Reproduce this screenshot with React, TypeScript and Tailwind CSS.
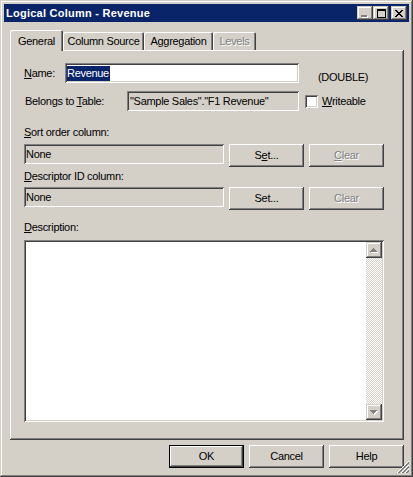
import React from "react";

const RAISED =
  "shadow-[inset_-1px_-1px_#404040,inset_1px_1px_#ffffff,inset_-2px_-2px_#808080]";
const CAPTION =
  "shadow-[inset_-1px_-1px_#404040,inset_1px_1px_#d4d0c8,inset_-2px_-2px_#808080,inset_2px_2px_#ffffff]";
const SUNKEN =
  "shadow-[inset_1px_1px_#808080,inset_-1px_-1px_#ffffff,inset_2px_2px_#404040,inset_-2px_-2px_#d4d0c8]";
const DISABLED = "text-[#808080] [text-shadow:1px_1px_0_#ffffff]";

function Pix({
  rows,
  color,
  shadow,
}: {
  rows: string[];
  color: string;
  shadow?: string;
}) {
  const w = rows[0].length + (shadow ? 1 : 0);
  const h = rows.length + (shadow ? 1 : 0);
  const cells: { x: number; y: number }[] = [];
  rows.forEach((r, y) =>
    r.split("").forEach((c, x) => {
      if (c === "x") cells.push({ x, y });
    })
  );
  return (
    <svg width={w} height={h} shapeRendering="crispEdges" className="block">
      {shadow &&
        cells.map((p) => (
          <rect key={"s" + p.x + "-" + p.y} x={p.x + 1} y={p.y + 1} width={1} height={1} fill={shadow} />
        ))}
      {cells.map((p) => (
        <rect key={"c" + p.x + "-" + p.y} x={p.x} y={p.y} width={1} height={1} fill={color} />
      ))}
    </svg>
  );
}

const CLOSE = ["xx....xx", ".xx..xx.", "..xxxx..", "...xx...", "..xxxx..", ".xx..xx.", "xx....xx"];
const MAX = [
  "xxxxxxxxx",
  "xxxxxxxxx",
  "x.......x",
  "x.......x",
  "x.......x",
  "x.......x",
  "x.......x",
  "x.......x",
  "xxxxxxxxx",
];
const MIN = ["xxxxxx", "xxxxxx"];
const UP = ["...x...", "..xxx..", ".xxxxx.", "xxxxxxx"];
const DOWN = ["xxxxxxx", ".xxxxx.", "..xxx..", "...x..."];

function Grip() {
  const px: { x: number; y: number; c: string }[] = [];
  for (let y = 0; y < 12; y++) {
    for (let x = 0; x < 12; x++) {
      const t = x + y - 11;
      if (t < 0) continue;
      const m = t % 4;
      if (m === 0) px.push({ x, y, c: "#ffffff" });
      else if (m === 1 || m === 2) px.push({ x, y, c: "#808080" });
    }
  }
  return (
    <svg width={12} height={12} shapeRendering="crispEdges" className="block">
      {px.map((p) => (
        <rect key={p.x + "-" + p.y} x={p.x} y={p.y} width={1} height={1} fill={p.c} />
      ))}
    </svg>
  );
}

function Button({
  children,
  disabled,
  isDefault,
}: {
  children: React.ReactNode;
  disabled?: boolean;
  isDefault?: boolean;
}) {
  if (isDefault) {
    return (
      <div className="w-[75px] h-[23px] border border-black bg-[#d4d0c8]">
        <div className={"w-full h-full flex items-center justify-center " + RAISED}>{children}</div>
      </div>
    );
  }
  return (
    <div
      className={
        "w-[75px] h-[23px] bg-[#d4d0c8] flex items-center justify-center " +
        RAISED +
        (disabled ? " " + DISABLED : "")
      }
    >
      {children}
    </div>
  );
}

export default function App() {
  return (
    <div className="w-[413px] h-[477px] bg-[#d4d0c8] p-[4px] flex flex-col relative font-['Liberation_Sans',Arial,sans-serif] text-[11px] tracking-[-0.3px] text-black shadow-[inset_-1px_-1px_#404040,inset_1px_1px_#d4d0c8,inset_-2px_-2px_#808080,inset_2px_2px_#ffffff]">
      {/* Title bar */}
      <div className="h-[18px] bg-[#0a246a] flex items-center justify-between pl-[2px] pr-[2px]">
        <span className="text-white font-bold text-[11px] tracking-[0.25px] leading-[18px]">
          Logical Column - Revenue
        </span>
        <div className="flex items-center">
          <div className={"w-[16px] h-[14px] bg-[#d4d0c8] flex items-end pl-[4px] pb-[2px] " + CAPTION}>
            <Pix rows={MIN} color="#808080" shadow="#ffffff" />
          </div>
          <div className={"w-[16px] h-[14px] bg-[#d4d0c8] flex items-center justify-center " + CAPTION}>
            <Pix rows={MAX} color="#000000" />
          </div>
          <div className={"ml-[2px] w-[16px] h-[14px] bg-[#d4d0c8] flex items-center justify-center " + CAPTION}>
            <Pix rows={CLOSE} color="#000000" />
          </div>
        </div>
      </div>

      <div className="flex flex-col pl-[6px] pr-[5px] pt-[8px]">
        {/* Tabs */}
        <div className="flex items-end h-[20px]">
          <div className="relative z-10 -mb-px h-[21px] w-[53px] bg-[#d4d0c8] rounded-t-[2px] flex items-center justify-center pt-[1px] shadow-[inset_1px_1px_#ffffff,inset_-1px_0_#404040,inset_-2px_0_#808080]">
            General
          </div>
          <div className="h-[18px] w-[81px] bg-[#d4d0c8] rounded-t-[2px] flex items-center justify-center shadow-[inset_1px_1px_#ffffff,inset_-1px_0_#404040,inset_-2px_0_#808080]">
            Column Source
          </div>
          <div className="h-[18px] w-[69px] bg-[#d4d0c8] rounded-t-[2px] flex items-center justify-center shadow-[inset_1px_1px_#ffffff,inset_-1px_0_#404040,inset_-2px_0_#808080]">
            Aggregation
          </div>
          <div
            className={
              "h-[18px] w-[43px] bg-[#d4d0c8] rounded-t-[2px] flex items-center justify-center shadow-[inset_1px_1px_#ffffff,inset_-1px_0_#404040,inset_-2px_0_#808080] " +
              DISABLED
            }
          >
            Levels
          </div>
        </div>

        {/* Panel */}
        <div className={"h-[390px] bg-[#d4d0c8] pl-[14px] pt-[13px] flex flex-col " + RAISED}>
          {/* Name row */}
          <div className="flex items-start h-[20px]">
            <div className="w-[41px] leading-[20px]">
              <u>N</u>ame:
            </div>
            <div className={"w-[234px] h-[20px] bg-white pl-[2px] pt-[2px] " + SUNKEN}>
              <span className="inline-block h-[15px] leading-[15px] bg-[#0a246a] text-white pr-px">Revenue</span>
            </div>
            <div className="ml-[19px] mt-[8px] leading-[13px]">(DOUBLE)</div>
          </div>

          {/* Belongs row */}
          <div className="flex items-center h-[20px] mt-[8px]">
            <div className="w-[103px] pl-px leading-[20px]">
              Belongs to <u>T</u>able:
            </div>
            <div className={"w-[172px] h-[20px] bg-[#d4d0c8] pl-[3px] leading-[20px] " + SUNKEN}>
              "Sample Sales"."F1 Revenue"
            </div>
            <div className={"ml-[6px] w-[13px] h-[13px] bg-white " + SUNKEN} />
            <div className="ml-[4px] leading-[13px]">
              <u>W</u>riteable
            </div>
          </div>

          {/* Sort order */}
          <div className="mt-[15px] leading-[13px]">
            <u>S</u>ort order column:
          </div>
          <div className="mt-[5px] flex items-start gap-[5px]">
            <div className={"w-[200px] h-[20px] bg-[#d4d0c8] pl-[2px] leading-[20px] " + SUNKEN}>None</div>
            <Button>
              S<u>e</u>t...
            </Button>
            <Button disabled>
              <u>C</u>lear
            </Button>
          </div>

          {/* Descriptor */}
          <div className="mt-[3px] leading-[13px]">
            <u>D</u>escriptor ID column:
          </div>
          <div className="mt-[4px] flex items-start gap-[5px]">
            <div className={"w-[200px] h-[20px] bg-[#d4d0c8] pl-[2px] leading-[20px] " + SUNKEN}>None</div>
            <Button>Set...</Button>
            <Button disabled>Clear</Button>
          </div>

          {/* Description */}
          <div className="mt-[11px] leading-[13px]">
            <u>D</u>escription:
          </div>
          <div className={"mt-[6px] w-[360px] h-[182px] bg-white p-[2px] flex " + SUNKEN}>
            <div className="flex-1" />
            <div className="w-[16px] flex flex-col">
              <div className={"w-[16px] h-[16px] bg-[#d4d0c8] flex items-center justify-center " + CAPTION}>
                <Pix rows={UP} color="#808080" shadow="#ffffff" />
              </div>
              <div className="flex-1 bg-[image:repeating-conic-gradient(#d4d0c8_0%_25%,#ffffff_0%_50%)] bg-[length:2px_2px]" />
              <div className={"w-[16px] h-[16px] bg-[#d4d0c8] flex items-center justify-center " + CAPTION}>
                <Pix rows={DOWN} color="#808080" shadow="#ffffff" />
              </div>
            </div>
          </div>
        </div>

        {/* Bottom buttons */}
        <div className="mt-[5px] flex justify-end gap-[5px]">
          <Button isDefault>OK</Button>
          <Button>Cancel</Button>
          <Button>Help</Button>
        </div>
      </div>

      <div className="absolute right-[4px] bottom-[4px]">
        <Grip />
      </div>
    </div>
  );
}
